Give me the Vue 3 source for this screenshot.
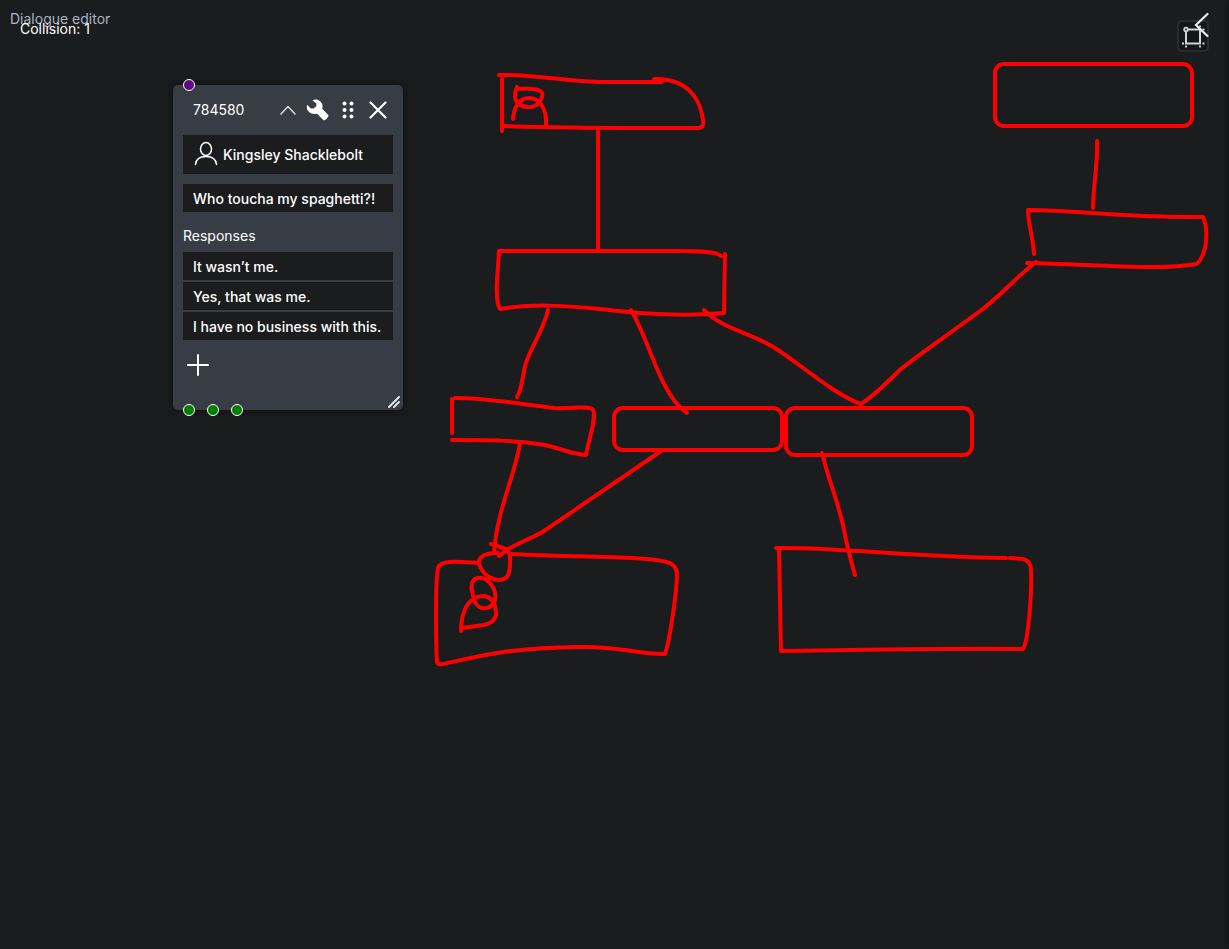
<script setup>
import { ref } from 'vue'

const line = ref('Who toucha my spaghetti?!')
const responses = ref([
  { id: 1, text: 'It wasn’t me.' },
  { id: 2, text: 'Yes, that was me.' },
  { id: 3, text: 'I have no business with this.' },
])

const boxes = [
  { x: 995, y: 64, w: 197, h: 62 },
  { x: 614, y: 408, w: 168, h: 42 },
  { x: 786, y: 408, w: 186, h: 47 },
]

const strokes = [
  // top node with portrait
  'M499 75C535 74 565 82 605 82S645 82 662 82',
  'M654 79C685 78 700 96 703 120Q705 128 697 128C640 128 560 128 503 126',
  'M502 79V131',
  'M517 87C514 93 514 101 519 104C526 109 536 108 540 101C544 94 544 90 532 89Q526 88 518 89',
  'M513 119C514 106 520 98 529 98C539 98 547 108 546 125',
  'M598 128V250',
  // second node
  'M499 251H675C705 251 718 252 721 256',
  'M725 254L724 313C680 317 640 314 600 309C560 305 530 304 500 309C494 300 498 270 499 251',
  'M548 310C543 332 530 348 525 366C522 380 522 388 517 397',
  'M631 310C645 334 651 358 663 382C670 396 678 407 687 413',
  'M704 310C724 330 750 332 775 348C800 364 835 395 861 404C875 395 884 385 902 368C920 354 950 333 976 314C1000 297 1017 276 1036 262',
  // left branch
  'M452 399V433',
  'M455 398C490 398 525 405 555 408C570 409 590 405 593 410C597 418 588 442 586 455C570 454 560 448 545 445C515 440 490 440 452 440',
  'M520 443C515 475 497 510 494 553',
  'M661 451L544 531C530 540 510 545 502 554L499 556',
  // lower left node with portrait
  'M478 563C462 562 440 559 438 568C435 585 436 645 437 662Q438 665 443 664C480 656 505 648 580 647C620 646 635 654 665 654C670 640 677 590 677 573Q676 566 670 563C650 556 600 558 510 554',
  'M491 544L506 549Q511 552 510 563C510 574 508 580 498 580C487 579 479 569 479 561Q481 553 498 553',
  'M472 592C470 580 475 577 482 578C490 580 497 590 495 600C492 609 483 610 478 606C473 602 473 594 472 590',
  'M461 631C461 612 468 597 482 596C491 596 496 602 496 615Q494 623 484 625L462 628',
  // lower right node
  'M822 453C832 492 840 505 846 540Q850 558 855 575',
  'M776 548C840 547 910 557 1006 558',
  'M1010 558L1023 559Q1031 561 1031 570C1032 595 1028 642 1023 649C950 648 865 650 781 651L779 549',
  // upper right node
  'M1097 141C1098 163 1093 188 1093 208',
  'M1034 254C1033 236 1028 224 1028 210C1080 210 1120 218 1203 217C1207 225 1207 240 1205 248Q1201 262 1196 264C1160 271 1090 264 1027 263',
]
</script>

<template>
  <main class="editor">
    <h1 class="title">Dialogue editor</h1>
    <p class="collision">Collision: 1</p>

    <svg class="sketch" aria-hidden="true">
      <rect
        v-for="box in boxes"
        :key="box.x"
        :x="box.x"
        :y="box.y"
        :width="box.w"
        :height="box.h"
        rx="9"
      />
      <path v-for="stroke in strokes" :key="stroke" :d="stroke" />
    </svg>

    <section class="node">
      <i class="port input-port"></i>
      <header class="node-head">
        <h2 class="node-id">784580</h2>
        <button class="icon-button" aria-label="Collapse">
          <svg width="16" height="10" viewBox="0 0 16 10">
            <path d="M1 9 8 1.5 15 9" fill="none" stroke="#ddd" stroke-width="1.5" stroke-linecap="round" />
          </svg>
        </button>
        <button class="icon-button" aria-label="Settings">
          <svg width="24" height="22" viewBox="0 0 24 22">
            <path d="M6.500 1.200C11-.8 16 2 16.600 7c0 1 0 1.700-.4 2.700l5.800 6c.7.700.6 1.500.1 2l-.7.800c0 .9-.5 1.500-1.300 1.800-.8.300-1 1-1.800 1-.6 0-1-.4-1.500-.9l-5.600-5.700C5.500 16 .6 13 .8 7.800c0-.8.200-1.500.4-2.100L4.800 9.400h3l2.600-2.500V4.600Z" fill="#fff" />
          </svg>
        </button>
        <button class="icon-button" aria-label="Move">
          <svg width="12" height="18" viewBox="0 0 12 18" fill="#fff">
            <circle cx="2.500" cy="2.500" r="2" /><circle cx="9.500" cy="2.500" r="2" />
            <circle cx="2.500" cy="9" r="2" /><circle cx="9.500" cy="9" r="2" />
            <circle cx="2.500" cy="15.500" r="2" /><circle cx="9.500" cy="15.500" r="2" />
          </svg>
        </button>
        <button class="icon-button" aria-label="Close">
          <svg width="18" height="18" viewBox="0 0 18 18">
            <path d="M1.500 1.500l15 15M16.500 1.500l-15 15" stroke="#fff" stroke-width="2.200" stroke-linecap="round" />
          </svg>
        </button>
      </header>

      <button class="speaker">
        <svg class="portrait" width="24" height="26" viewBox="0 0 24 26" fill="none" stroke="#fff" stroke-width="1.500">
          <ellipse cx="12" cy="8" rx="5.500" ry="6.500" />
          <path d="M1.500 23.500C2 18 6 15.500 12 15.500s10 2.500 10.500 8" stroke-linecap="round" />
        </svg>
        Kingsley Shacklebolt
      </button>

      <input v-model="line" class="field" aria-label="Dialogue line" />

      <h3 class="label">Responses</h3>
      <div class="responses">
        <input
          v-for="response in responses"
          :key="response.id"
          v-model="response.text"
          class="field"
          :aria-label="`Response ${response.id}`"
        />
      </div>

      <button class="icon-button add" aria-label="Add response">
        <svg width="22" height="22" viewBox="0 0 22 22">
          <path d="M11 1v20M1 11h20" stroke="#fff" stroke-width="2" stroke-linecap="round" />
        </svg>
      </button>

      <svg class="resize" width="14" height="14" viewBox="0 0 14 14">
        <path d="M2 12 12 2M7 12l5-5" stroke="#e4e4e4" stroke-width="2" stroke-linecap="round" />
      </svg>
      <div class="outputs">
        <i v-for="response in responses" :key="response.id" class="port"></i>
      </div>
    </section>

    <button class="frame-button" aria-label="Frame selection">
      <svg width="26" height="26" viewBox="0 0 26 26" fill="none" stroke="#d4d4d4">
        <path d="M8 6.500h12v14H6V9" stroke-width="2" />
        <circle cx="6" cy="6.500" r="1.800" stroke-width="1.800" />
        <path d="M2 20.500h2M22.500 20.500h2M6 22.500v2M20 22.500v2M22.500 6.500h2M20 2.500v2" stroke-width="1.800" />
      </svg>
    </button>
    <button class="panel-toggle" aria-label="Open side panel">
      <svg width="16" height="26" viewBox="0 0 16 26">
        <path d="M13.500 2 2 13 13.500 24" fill="none" stroke="#eee" stroke-width="2.200" stroke-linecap="round" />
      </svg>
    </button>
    <aside class="side-panel"></aside>
  </main>
</template>

<style>
body {
  background: #1b1c1d;
}
</style>

<style scoped>
.editor {
  position: relative;
  box-sizing: border-box;
  min-height: 100vh;
  padding: 10px;
  overflow: hidden;
  background: #1b1c1d;
  color: #fff;
  font: 500 14px/18px Inter, "Liberation Sans", sans-serif;
}
.title {
  margin: 0;
  color: #a9b4c8;
  font-size: 14px;
  font-weight: 400;
}
.collision {
  position: absolute;
  top: 20px;
  left: 20px;
  margin: 0;
  font-weight: 400;
}
.sketch {
  position: absolute;
  inset: 0;
  width: 100%;
  height: 100%;
  fill: none;
  stroke: #f00;
  stroke-width: 4;
  stroke-linecap: round;
  stroke-linejoin: round;
  pointer-events: none;
}
.node {
  position: absolute;
  top: 85px;
  left: 173px;
  display: flex;
  flex-direction: column;
  box-sizing: border-box;
  width: 230px;
  padding: 10px 10px 30px;
  border-radius: 5px;
  background: #383c45;
  box-shadow: 0 0 10px rgba(0, 0, 0, 0.5);
}
.node-head {
  display: flex;
  align-items: center;
  margin-bottom: 10px;
}
.node-id {
  flex: 1;
  margin: 0;
  padding-left: 10px;
  font-size: 14px;
  font-weight: 400;
}
button {
  padding: 0;
  border: 0;
  background: none;
  color: inherit;
  font: inherit;
  cursor: pointer;
}
.icon-button {
  display: flex;
  align-items: center;
  justify-content: center;
  width: 30px;
  height: 30px;
}
.speaker {
  display: flex;
  align-items: center;
  gap: 5px;
  height: 39px;
  margin-bottom: 10px;
  padding: 0 11px;
  background: #1b1c1d;
}
.portrait {
  margin-bottom: 2px;
}
.field {
  box-sizing: border-box;
  width: 100%;
  height: 28px;
  padding: 0 10px;
  border: 0;
  background: #1b1c1d;
  color: inherit;
  font: inherit;
}
.label {
  margin: 15px 0 7px;
  font-size: 14px;
  font-weight: 400;
}
.responses {
  display: grid;
  gap: 2px;
}
.add {
  margin-top: 10px;
}
.port {
  display: block;
  box-sizing: border-box;
  width: 12px;
  height: 12px;
  border: 1px solid #fff;
  border-radius: 50%;
  background: #008000;
}
.input-port {
  position: absolute;
  top: -6px;
  left: 10px;
  background: #60087e;
}
.outputs {
  position: absolute;
  bottom: -6px;
  left: 10px;
  display: flex;
  gap: 12px;
}
.resize {
  position: absolute;
  right: 2px;
  bottom: 1px;
}
.frame-button {
  position: absolute;
  top: 20px;
  right: 20px;
  display: flex;
  align-items: center;
  justify-content: center;
  width: 32px;
  height: 32px;
  border: 2px solid #2a2b2d;
  border-radius: 5px;
  background: #151617;
}
.panel-toggle {
  position: absolute;
  top: 12px;
  right: 19px;
  display: flex;
}
.side-panel {
  position: absolute;
  top: 0;
  bottom: 0;
  left: 100%;
  width: 20px;
  box-shadow: 0 0 10px rgba(0, 0, 0, 0.5);
}
</style>
